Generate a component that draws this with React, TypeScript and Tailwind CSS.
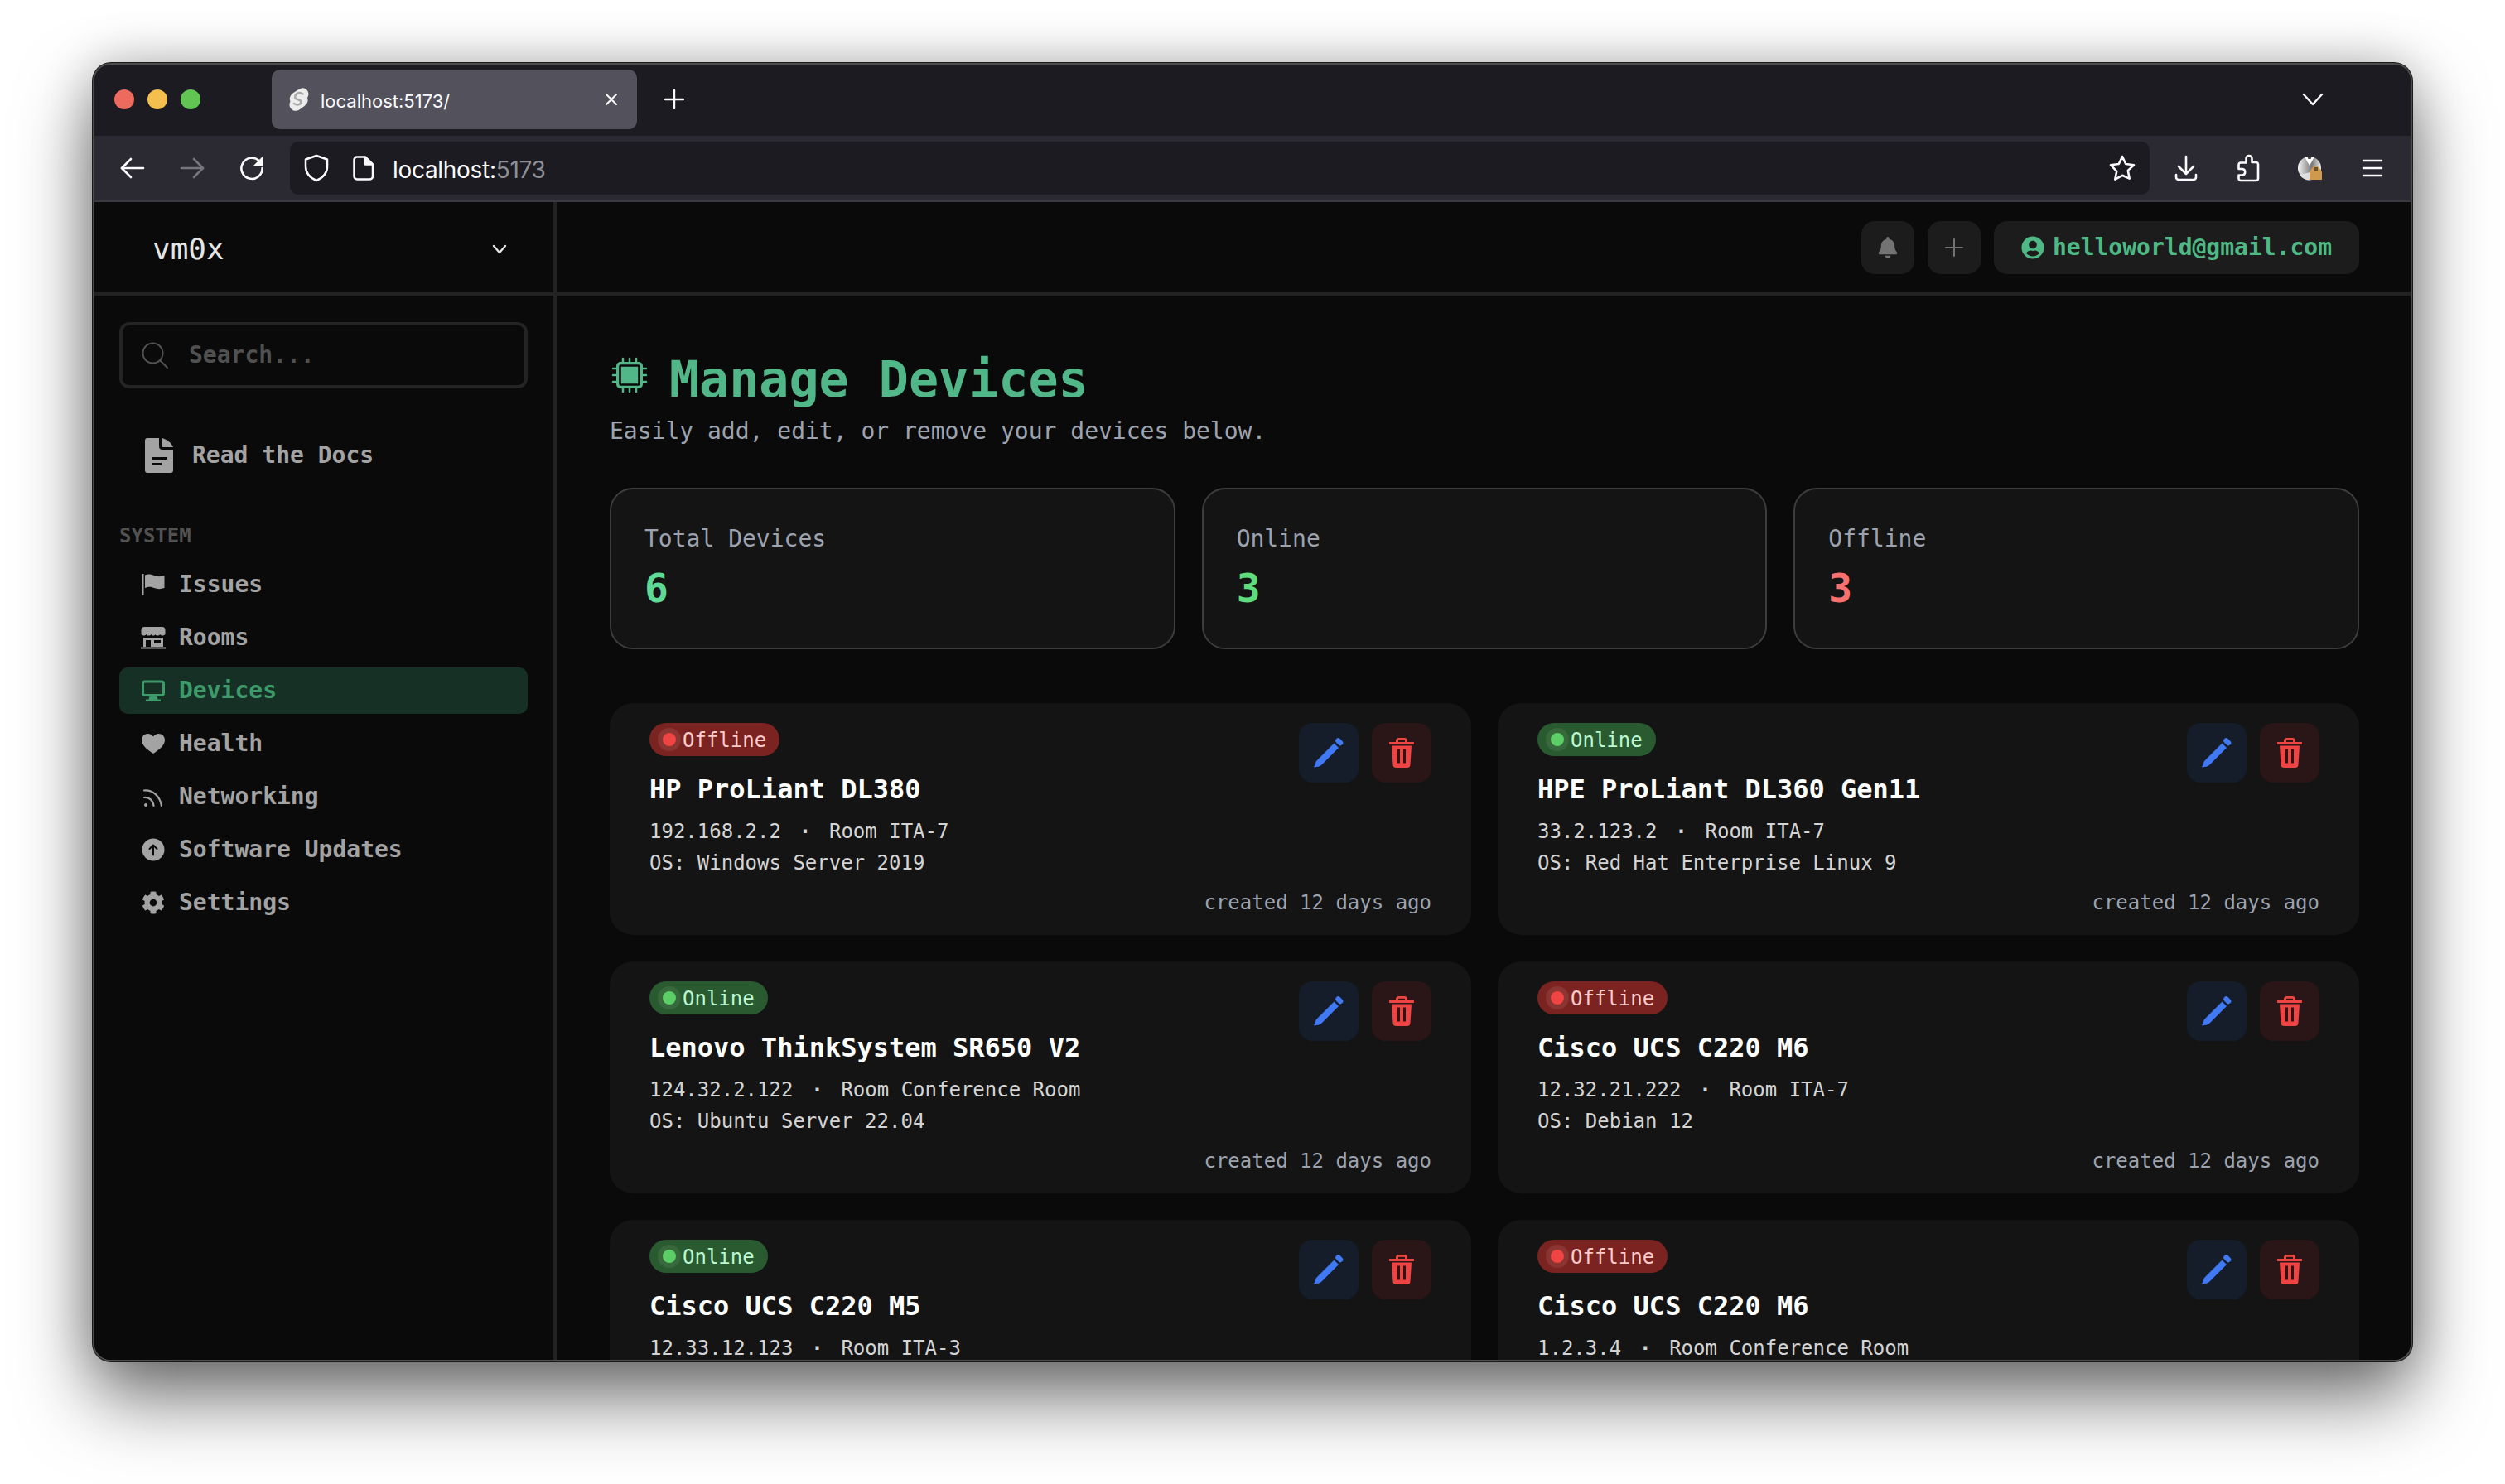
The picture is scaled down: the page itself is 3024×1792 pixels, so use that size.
import React from "react";
import { FaCog, FaBell, FaUserCircle } from "react-icons/fa";

const Back = () => (
  <svg width="30" height="26" viewBox="0 0 30 26" fill="none" stroke="#fbfbfe" strokeWidth="2.6" strokeLinecap="round" strokeLinejoin="round">
    <path d="M2 13H28" />
    <path d="M13 2 2 13l11 11" />
  </svg>
);
const Forward = () => (
  <svg width="30" height="26" viewBox="0 0 30 26" fill="none" stroke="#77767c" strokeWidth="2.6" strokeLinecap="round" strokeLinejoin="round">
    <path d="M2 13H28" />
    <path d="M17 2l11 11-11 11" />
  </svg>
);
const Reload = () => (
  <svg width="30" height="30" viewBox="0 0 30 30" fill="none">
    <path d="M24 6.5A12.6 12.6 0 1 0 27.6 15" stroke="#fbfbfe" strokeWidth="2.6" strokeLinecap="round" />
    <path d="M28 1v11H17z" fill="#fbfbfe" />
  </svg>
);
const Shield = () => (
  <svg width="30" height="34" viewBox="0 0 30 34" fill="none" stroke="#fbfbfe" strokeWidth="2.5" strokeLinejoin="round">
    <path d="M15 2 28 6.5V15c0 8-5 13.500-13 17C7 28.500 2 23 2 15V6.500Z" />
  </svg>
);
const Doc = () => (
  <svg width="26" height="30" viewBox="0 0 26 30" fill="none" stroke="#fbfbfe" strokeWidth="2.5" strokeLinejoin="round">
    <path d="M5 1.500h10l9 9V25a3.500 3.500 0 0 1-3.500 3.500H5A3.500 3.500 0 0 1 1.500 25V5A3.500 3.500 0 0 1 5 1.500Z" />
    <path d="M15 1.500V10.500h9" fill="#fbfbfe" />
  </svg>
);
const Star = () => (
  <svg width="34" height="34" viewBox="0 0 34 34" fill="none" stroke="#fbfbfe" strokeWidth="2.6" strokeLinejoin="round">
    <path d="M17 3l4.200 9 9.800 1.200-7.200 6.700 1.900 9.700L17 25.800l-8.700 4.800 1.900-9.700L3 13.200 12.800 12Z" />
  </svg>
);
const Download = () => (
  <svg width="28" height="32" viewBox="0 0 28 32" fill="none" stroke="#fbfbfe" strokeWidth="2.6" strokeLinecap="round" strokeLinejoin="round">
    <path d="M14 2v20" />
    <path d="M5 14l9 9 9-9" />
    <path d="M2 24v3a3 3 0 0 0 3 3h18a3 3 0 0 0 3-3v-3" />
  </svg>
);
const Puzzle = () => (
  <svg width="28" height="34" viewBox="0 0 28 34" fill="none" stroke="#fbfbfe" strokeWidth="2.6" strokeLinejoin="round">
    <path d="M15 2a3.500 3.500 0 0 1 3.500 3.500V10h5A2.500 2.500 0 0 1 26 12.500V29.500A2.500 2.500 0 0 1 23.500 32H5a2.500 2.500 0 0 1-2.500-2.500V25.500H7a3.800 3.800 0 0 0 0-7.500H2.500V13A2.500 2.500 0 0 1 5 10.500h6.500V5.500A3.500 3.500 0 0 1 15 2Z" />
  </svg>
);
const Avatar = () => (
  <svg width="30" height="30" viewBox="0 0 30 30">
    <defs>
      <linearGradient id="avg" x1="0" y1="0" x2="1" y2="0">
        <stop offset="0" stopColor="#f4f4f4" />
        <stop offset="0.6" stopColor="#777" />
        <stop offset="1" stopColor="#eee" />
      </linearGradient>
    </defs>
    <circle cx="14" cy="15" r="14" fill="url(#avg)" />
    <path d="M8 1.500h12L14 12Z" fill="#fff" />
    <path d="M11.500 1.500h5l-1 2.500h-3z" fill="#444" />
    <path d="M2 23a14 14 0 0 0 18 5l-5-8Z" fill="#ddd" />
    <path d="M17 15a5 5 0 0 1 9 0l1.500 2.500 1.500 2V29H14v-9.500Z" fill="#cf9a4e" />
    <rect x="19.500" y="14" width="4.500" height="4" fill="#6b5230" />
  </svg>
);
const Menu = () => (
  <svg width="26" height="24" viewBox="0 0 26 24" stroke="#fbfbfe" strokeWidth="2.6" strokeLinecap="round">
    <path d="M2 3h22M2 12h22M2 21h22" />
  </svg>
);
const SvelteMark = () => (
  <svg width="26" height="30" viewBox="0 0 26 30" fill="none">
    <path d="M17 1.500c3-.8 6 1 7.500 3.500 1.500 3 1 6-.5 8 1 2.500 .8 5.500-1 7.500-1 1.500-7 6-9.500 7.500-3 1.500-7 1-9.500-2-2-3-2-6-.5-8.500-1.200-2.500-1-5.500 1-8 1.500-1.800 8-6.500 12.500-8Z" fill="#ececec" />
    <path d="M18.500 8.500c-3-2-6-1.500-8 .5-2.500 2.500-1.500 5 1.500 6 3 .8 5.500 1.500 4 4.500-1.500 2.500-5 2.500-8 .5" stroke="#a9a9ab" strokeWidth="2.6" strokeLinecap="round" />
  </svg>
);

const Flag = () => (
  <svg width="28" height="28" viewBox="0 0 28 28" fill="#a3a3a3">
    <rect x="0.500" y="1" width="2" height="26" />
    <path d="M4 2.500C9 1 11 1.500 15 3c4 1.500 8 1.500 12.500 0v15c-4.500 1.500-8.500 1.500-12.500 0-4-1.500-6-1.700-11 0Z" />
  </svg>
);
const Store = () => (
  <svg width="30" height="28" viewBox="0 0 30 28" fill="#a3a3a3">
    <path d="M4 1h22c2 0 3.500 1.500 3.500 4v4c0 1.500-1 2.500-3 2.500-1.500 0-2.500-.5-3.200-1.500-.7 1-2 1.500-3.200 1.500S18 11 17.500 10c-.5 1-1.500 1.500-2.500 1.500S13 11 12.500 10c-.5 1-2 1.500-3.200 1.500S7 11 6.500 10c-.7 1-1.800 1.500-3 1.500C1.500 11.500.5 10.500.5 9V5C.5 2.500 2 1 4 1Z" />
    <path fillRule="evenodd" d="M3 14h24v11H3Zm3 3v8h6v-8Zm10 0v4h8v-4Z" />
    <rect x="0" y="25.500" width="30" height="2" />
  </svg>
);
const Desktop = () => (
  <svg width="28" height="28" viewBox="0 0 28 28" fill="#3d9b6b">
    <path fillRule="evenodd" d="M4 1.500h20a4 4 0 0 1 4 4V17a4 4 0 0 1-4 4H4a4 4 0 0 1-4-4V5.500a4 4 0 0 1 4-4Zm0 3a1 1 0 0 0-1 1V17a1 1 0 0 0 1 1h20a1 1 0 0 0 1-1V5.500a1 1 0 0 0-1-1Z" />
    <path d="M9.500 21h9l1 3.500h3.500V27H5v-2.500h3.500Z" />
  </svg>
);
const Heart = () => (
  <svg width="28" height="28" viewBox="0 0 28 28" fill="#a3a3a3">
    <path d="M14 26C8 22 0 16.500 0 9.500 0 5 3.500 2 7.500 2c2.500 0 5 1.200 6.500 3.500C15.500 3.200 18 2 20.500 2 24.500 2 28 5 28 9.500 28 16.500 20 22 14 26Z" />
  </svg>
);
const Rss = () => (
  <svg width="28" height="28" viewBox="0 0 28 28" fill="none" stroke="#a3a3a3" strokeWidth="2.2" strokeLinecap="round">
    <circle cx="5" cy="24" r="2" fill="#a3a3a3" stroke="none" />
    <path d="M3 15c6-.5 11 3.500 11.500 10" />
    <path d="M3 6.500c10-1 19 6.500 21 18.500" />
  </svg>
);
const Update = () => (
  <svg width="28" height="28" viewBox="0 0 28 28">
    <circle cx="14" cy="14" r="13.500" fill="#a3a3a3" />
    <path d="M14 20.500V9M9.500 13 14 8.500l4.500 4.500" fill="none" stroke="#0a0a0a" strokeWidth="2" strokeLinecap="round" strokeLinejoin="round" />
  </svg>
);
const FileDoc = () => (
  <svg width="34" height="42" viewBox="0 0 34 42" fill="#a3a3a3">
    <path fillRule="evenodd" d="M3 0h14v10a4 4 0 0 0 4 4h13v25a3 3 0 0 1-3 3H3a3 3 0 0 1-3-3V3a3 3 0 0 1 3-3Zm6 23v3h17v-3Zm0 7v3h11v-3Z" />
    <path d="M20 0c6 1 12 6 14 11H21.500A1.500 1.500 0 0 1 20 9.500Z" />
  </svg>
);
const Search = () => (
  <svg width="34" height="34" viewBox="0 0 34 34" fill="none" stroke="#525252" strokeWidth="2">
    <circle cx="14.500" cy="14.500" r="12" />
    <path d="M23.500 23.500 32 32" strokeLinecap="round" />
  </svg>
);
const Chip = () => (
  <svg className="mt-[8px]" width="48" height="48" viewBox="0 0 48 48" fill="none">
    <path d="M16 4v6M24 4v6M32 4v6M16 38v6M24 38v6M32 38v6M4 16h6M4 24h6M4 32h6M38 16h6M38 24h6M38 32h6" stroke="#52b788" strokeWidth="2.500" strokeLinecap="round" />
    <rect x="8" y="8" width="32" height="32" rx="5" fill="#52b788" />
    <rect x="12.500" y="12.500" width="23" height="23" rx="1" fill="#52b788" stroke="#0a0a0a" strokeWidth="2.600" />
  </svg>
);
const Pencil = () => (
  <svg width="36" height="36" viewBox="0 0 36 36" fill="#3f79f3">
    <path d="M0 35.500 3 28 24.500 6.500 30 12 9 33c-2 1.500-5 2-9 2.500Z" />
    <path d="M29.500 3.500 32 6" stroke="#3f79f3" strokeWidth="6.500" strokeLinecap="round" />
  </svg>
);
const Trash = () => (
  <svg width="30" height="36" viewBox="0 0 30 36" fill="#ef4444">
    <path fillRule="evenodd" d="M8 5V3.500A3.500 3.500 0 0 1 11.500 0h7A3.500 3.500 0 0 1 22 3.500V5h7a1 1 0 0 1 0 3H1a1 1 0 0 1 0-3Zm3 0h8V3.500a.8.8 0 0 0-.8-.8h-6.400a.8.8 0 0 0-.8.8Z" />
    <path fillRule="evenodd" d="M3 9.500h24l-1.500 22.500a4 4 0 0 1-4 4h-13a4 4 0 0 1-4-4Zm7 4v17h3v-17Zm7 0v17h3v-17Z" />
  </svg>
);

const nav: { label: string; icon: React.ReactNode; active?: boolean }[] = [
  { label: "Issues", icon: <Flag /> },
  { label: "Rooms", icon: <Store /> },
  { label: "Devices", icon: <Desktop />, active: true },
  { label: "Health", icon: <Heart /> },
  { label: "Networking", icon: <Rss /> },
  { label: "Software Updates", icon: <Update /> },
  { label: "Settings", icon: <FaCog size={28} color="#a3a3a3" /> },
];

type Device = { name: string; ip: string; room: string; os?: string; online: boolean };

const devices: Device[] = [
  { name: "HP ProLiant DL380", ip: "192.168.2.2", room: "Room ITA-7", os: "OS: Windows Server 2019", online: false },
  { name: "HPE ProLiant DL360 Gen11", ip: "33.2.123.2", room: "Room ITA-7", os: "OS: Red Hat Enterprise Linux 9", online: true },
  { name: "Lenovo ThinkSystem SR650 V2", ip: "124.32.2.122", room: "Room Conference Room", os: "OS: Ubuntu Server 22.04", online: true },
  { name: "Cisco UCS C220 M6", ip: "12.32.21.222", room: "Room ITA-7", os: "OS: Debian 12", online: false },
  { name: "Cisco UCS C220 M5", ip: "12.33.12.123", room: "Room ITA-3", online: true },
  { name: "Cisco UCS C220 M6", ip: "1.2.3.4", room: "Room Conference Room", online: false },
];

function Stat({ label, value, color }: { label: string; value: string; color: string }) {
  return (
    <div className="h-[195px] rounded-[28px] border-2 border-[#3d3d3d] bg-[#141414] px-[40px] pt-[40px]">
      <div className="text-[28px] leading-[40px] text-[#9ca3af]">{label}</div>
      <div className={`mt-[15px] text-[48px] font-bold leading-[48px] ${color}`}>{value}</div>
    </div>
  );
}

function DeviceCard({ d }: { d: Device }) {
  return (
    <div className="h-[280px] rounded-[28px] bg-[#141414] px-[48px] pt-[24px]">
      <div className="flex items-start justify-between">
        <div>
          <div className={`flex h-[40px] w-fit items-center rounded-full pl-[10px] pr-[16px] ${d.online ? "bg-[#2a5a30]" : "bg-[#7a2320]"}`}>
            <span className={`flex h-[28px] w-[28px] items-center justify-center rounded-full ${d.online ? "bg-[#37693c]" : "bg-[#8a3532]"}`}>
              <span className={`h-[16px] w-[16px] rounded-full ${d.online ? "bg-[#5bcf65]" : "bg-[#ef4444]"}`} />
            </span>
            <span className={`ml-[2px] pt-[2px] text-[24px] leading-[38px] ${d.online ? "text-[#bbf7d0]" : "text-[#fecaca]"}`}>{d.online ? "Online" : "Offline"}</span>
          </div>
          <div className="mt-[16px] text-[32px] font-bold leading-[48px] text-white">{d.name}</div>
          <div className="mt-[9px] flex text-[24px] leading-[37px] text-[#d4d4d4]">
            <span>{d.ip}</span>
            <span className="w-[58px] text-center font-bold">·</span>
            <span>{d.room}</span>
          </div>
          {d.os && <div className="text-[24px] leading-[39px] text-[#d4d4d4]">{d.os}</div>}
        </div>
        <div className="flex gap-[16px]">
          <button className="flex h-[72px] w-[72px] items-center justify-center rounded-[16px] bg-[#151d2b]"><Pencil /></button>
          <button className="flex h-[72px] w-[72px] items-center justify-center rounded-[16px] bg-[#2a1616]"><Trash /></button>
        </div>
      </div>
      {d.os && <div className="mt-[12px] text-right text-[24px] leading-[32px] text-[#9ca3af]">created 12 days ago</div>}
    </div>
  );
}

export default function App() {
  return (
    <div className="h-[1792px] w-[3024px] overflow-hidden bg-white pl-[112px] pt-[76px]">
      <div className="flex h-[1568px] w-[2800px] flex-col overflow-hidden rounded-[22px] border-2 border-[#4c4c4c] bg-[#0a0a0a] shadow-[0_0_0_1px_#1a1a1a,0_44px_90px_rgba(0,0,0,0.55),0_0_60px_rgba(0,0,0,0.22)]">
        <div className="flex h-[86px] shrink-0 items-center bg-[#1c1b22] pb-[2px] pl-[24px] pr-[105px] [font-family:'Inter',sans-serif]">
          <div className="flex gap-[16px]">
            <span className="h-[24px] w-[24px] rounded-full bg-[#ed6a5e]" />
            <span className="h-[24px] w-[24px] rounded-full bg-[#f4bf4f]" />
            <span className="h-[24px] w-[24px] rounded-full bg-[#61c554]" />
          </div>
          <div className="ml-[86px] flex h-[72px] w-[441px] items-center rounded-[10px] bg-[#53525c] pl-[19px] pr-[23px]">
            <SvelteMark />
            <span className="ml-[14px] flex-1 pt-[4px] text-[22px] text-[#fbfbfe]">localhost:5173/</span>
            <svg width="16" height="16" viewBox="0 0 16 16" stroke="#fbfbfe" strokeWidth="2" strokeLinecap="round"><path d="M2 2l12 12M14 2 2 14" /></svg>
          </div>
          <svg className="ml-[33px]" width="24" height="24" viewBox="0 0 24 24" stroke="#fbfbfe" strokeWidth="2.400" strokeLinecap="round"><path d="M12 1v22M1 12h22" /></svg>
          <svg className="ml-auto" width="26" height="16" viewBox="0 0 26 16" fill="none" stroke="#fbfbfe" strokeWidth="2.400" strokeLinecap="round" strokeLinejoin="round"><path d="M2 2l11 12L24 2" /></svg>
        </div>

        <div className="flex h-[80px] shrink-0 items-center border-b-2 border-[#3a3941] bg-[#2b2a33] pl-[10px] pr-[9px] [font-family:'Inter',sans-serif]">
          <div className="flex w-[72px] justify-center"><Back /></div>
          <div className="flex w-[72px] justify-center"><Forward /></div>
          <div className="flex w-[72px] justify-center"><Reload /></div>
          <div className="ml-[10px] mr-[6px] flex h-[64px] flex-1 items-center rounded-[10px] bg-[#1c1b22] pl-[17px] pr-[16px]">
            <Shield />
            <span className="ml-[29px]"><Doc /></span>
            <span className="ml-[22px] pt-[4px] text-[28px] tracking-[-0.3px] text-[#fbfbfe]">localhost:<span className="text-[#8f8f96]">5173</span></span>
            <span className="ml-auto"><Star /></span>
          </div>
          <div className="flex w-[75px] justify-center"><Download /></div>
          <div className="flex w-[75px] justify-center"><Puzzle /></div>
          <div className="flex w-[75px] justify-center"><Avatar /></div>
          <div className="flex w-[75px] justify-center"><Menu /></div>
        </div>

        <div className="flex min-h-0 flex-1 [font-family:'DejaVu_Sans_Mono',monospace]">
          <aside className="w-[558px] shrink-0 border-r-4 border-[#222222] bg-[#0a0a0a]">
            <div className="flex h-[113px] items-center justify-between border-b-4 border-[#222222] pl-[70px] pr-[56px] pt-[4px]">
              <span className="text-[36px] text-[#e5e5e5]">vm0x</span>
              <svg width="18" height="12" viewBox="0 0 18 12" fill="none" stroke="#e5e5e5" strokeWidth="2.400" strokeLinecap="round" strokeLinejoin="round"><path d="M2 2l7 8 7-8" /></svg>
            </div>
            <div className="pl-[30px] pr-[31px]">
              <div className="mt-[32px] flex h-[80px] items-center rounded-[12px] border-4 border-[#242424] pl-[22px]">
                <Search />
                <span className="ml-[24px] text-[28px] font-bold text-[#505050]">Search...</span>
              </div>
              <div className="mt-[60px] flex h-[42px] items-center pl-[31px]">
                <FileDoc />
                <span className="ml-[23px] text-[28px] font-bold text-[#a3a3a3]">Read the Docs</span>
              </div>
              <div className="mt-[58px] text-[24px] font-bold leading-[36px] text-[#525252]">SYSTEM</div>
              <div className="mt-[13px] flex flex-col gap-[8px]">
                {nav.map((n) => (
                  <div key={n.label} className={`flex h-[56px] items-center rounded-[10px] pl-[26px] ${n.active ? "bg-[#163026]" : ""}`}>
                    <span className="flex w-[30px] justify-center">{n.icon}</span>
                    <span className={`ml-[16px] text-[28px] font-bold ${n.active ? "text-[#3d9b6b]" : "text-[#a3a3a3]"}`}>{n.label}</span>
                  </div>
                ))}
              </div>
            </div>
          </aside>

          <main className="flex min-w-0 flex-1 flex-col overflow-hidden bg-[#0a0a0a]">
            <header className="flex h-[113px] shrink-0 items-center justify-end gap-[16px] border-b-4 border-[#222222] pr-[62px]">
              <button className="flex h-[64px] w-[64px] items-center justify-center rounded-[16px] bg-[#1c1c1c]"><FaBell size={26} color="#737373" /></button>
              <button className="flex h-[64px] w-[64px] items-center justify-center rounded-[16px] bg-[#1c1c1c]">
                <svg width="24" height="24" viewBox="0 0 24 24" stroke="#737373" strokeWidth="2" strokeLinecap="round"><path d="M12 2v20M2 12h20" /></svg>
              </button>
              <div className="flex h-[64px] w-[441px] items-center justify-center gap-[10px] rounded-[16px] bg-[#1c1c1c]">
                <FaUserCircle size={28} color="#4fb985" />
                <span className="text-[28px] font-bold text-[#4fb985]">helloworld@gmail.com</span>
              </div>
            </header>
            <div className="min-h-0 flex-1 overflow-hidden pl-[64px] pr-[62px] pt-[64px]">
              <div className="flex h-[68px] items-start gap-[24px]">
                <Chip />
                <h1 className="mt-[3px] text-[60px] font-bold leading-[68px] text-[#52b788]">Manage Devices</h1>
              </div>
              <p className="mt-[12px] text-[28px] leading-[40px] text-[#9ca3af]">Easily add, edit, or remove your devices below.</p>
              <div className="mt-[48px] grid grid-cols-3 gap-[32px]">
                <Stat label="Total Devices" value="6" color="text-[#5eda96]" />
                <Stat label="Online" value="3" color="text-[#5fdc7b]" />
                <Stat label="Offline" value="3" color="text-[#f87171]" />
              </div>
              <div className="mt-[65px] grid grid-cols-2 gap-[32px]">
                {devices.map((d, i) => (
                  <DeviceCard key={i} d={d} />
                ))}
              </div>
            </div>
          </main>
        </div>
      </div>
    </div>
  );
}
